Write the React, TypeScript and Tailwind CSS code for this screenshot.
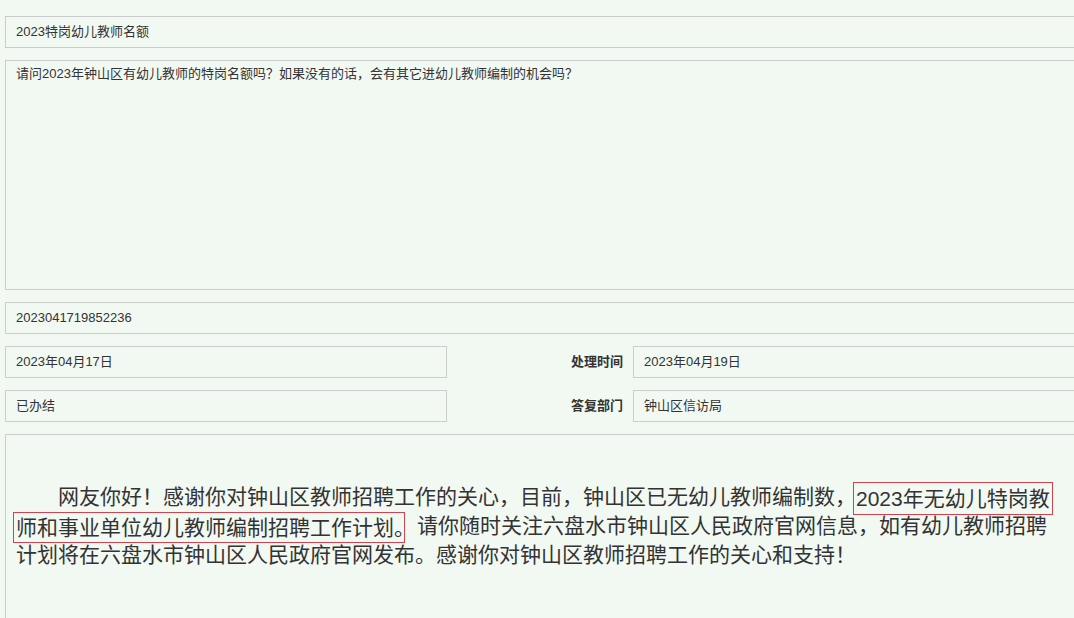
import React from "react";

const FONT = '"Liberation Sans", "Noto Sans CJK SC", sans-serif';

function Field({ children, className = "" }: { children: React.ReactNode; className?: string }) {
  return (
    <div
      className={`h-[32px] border border-[#cccccc] bg-[#f2f8f2] px-[10px] flex items-center text-[13px] text-[#333333] whitespace-nowrap ${className}`}
    >
      {children}
    </div>
  );
}

function Label({ children }: { children: React.ReactNode }) {
  return (
    <div className="w-[186px] shrink-0 pr-[10px] text-right text-[13px] font-bold text-[#333333]">
      {children}
    </div>
  );
}

export default function App() {
  return (
    <div
      className="w-[1074px] h-[618px] overflow-hidden bg-[#f2f8f2]"
      style={{ fontFamily: FONT }}
    >
      <div className="w-[1120px] pl-[5px] pt-[16px] flex flex-col gap-[12px]">
        <Field>2023特岗幼儿教师名额</Field>

        <div className="h-[230px] border border-[#cccccc] px-[10px] pt-[3px] text-[13px] text-[#333333] leading-[20px]">
          请问2023年钟山区有幼儿教师的特岗名额吗？如果没有的话，会有其它进幼儿教师编制的机会吗？
        </div>

        <Field>2023041719852236</Field>

        <div className="flex items-center">
          <Field className="w-[442px] shrink-0">2023年04月17日</Field>
          <Label>处理时间</Label>
          <Field className="flex-1">2023年04月19日</Field>
        </div>

        <div className="flex items-center">
          <Field className="w-[442px] shrink-0">已办结</Field>
          <Label>答复部门</Label>
          <Field className="flex-1">钟山区信访局</Field>
        </div>

        <div className="h-[200px] border border-[#cccccc] px-[10px] pt-[48px] text-[21px] leading-[27px] text-[#333333] whitespace-nowrap">
          <p>
            <span className="pl-[42px]">
              网友你好！感谢你对钟山区教师招聘工作的关心，目前，钟山区已无幼儿教师编制数，
            </span>
            <span className="inline-block border border-[#d2424f] -ml-[3px] px-[2px] leading-[31px] -my-[3px] align-middle">
              2023年无幼儿特岗教
            </span>
            <br />
            <span className="inline-block border border-[#d2424f] -ml-[3px] pl-[2px] leading-[29px] -my-[2px] align-middle">
              师和事业单位幼儿教师编制招聘工作计划<span className="mr-[-11px]">。</span>
            </span>
            <span className="inline-block w-[12px]" />
            请你随时关注六盘水市钟山区人民政府官网信息，如有幼儿教师招聘
            <br />
            计划将在六盘水市钟山区人民政府官网发布。感谢你对钟山区教师招聘工作的关心和支持！
          </p>
        </div>
      </div>
    </div>
  );
}
